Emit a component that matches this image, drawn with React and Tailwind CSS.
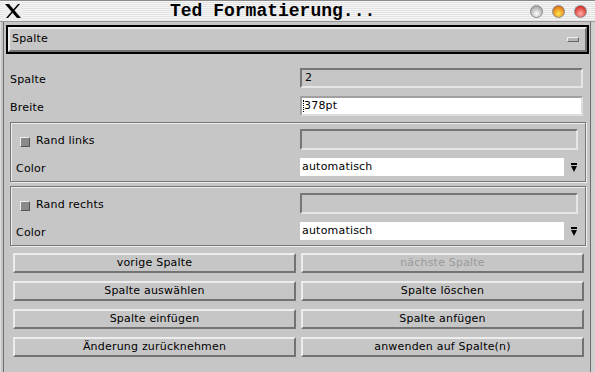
import React from 'react';

const raised = 'border-t-2 border-l-2 border-b-2 border-r-2 border-t-[#ececec] border-l-[#ececec] border-b-[#737373] border-r-[#737373]';
const sunken = 'border-2 border-t-[#767676] border-l-[#767676] border-b-[#e6e6e6] border-r-[#e6e6e6]';

function XLogo() {
    return (
        <svg width="18" height="16" viewBox="0 0 18 16">
            <polygon points="1,1 5,1 17,15 13,15" fill="#000" />
            <polygon points="14,1 16,1 4,15 2,15" fill="#000" />
        </svg>
    );
}

function Dot({ from, to }) {
    return (
        <div
            className="w-[13px] h-[13px] rounded-full border border-[#8a8a8a]"
            style={{ background: `radial-gradient(circle at 50% 70%, ${from} 0%, ${to} 75%)` }}
        />
    );
}

function PinArrow() {
    return (
        <svg width="6" height="9" viewBox="0 0 6 9">
            <rect x="0" y="0" width="6" height="2" fill="#000" />
            <polygon points="0,3 6,3 3,9" fill="#000" />
        </svg>
    );
}

function Button({ children, disabled }) {
    return (
        <div className={`h-[20px] flex items-center justify-center bg-[#c6c6c6] ${raised} ${disabled ? 'text-[#9a9a9a]' : 'text-black'}`}>
            {children}
        </div>
    );
}

function RandFrame({ label }) {
    return (
        <div className="ml-[6px] w-[576px] h-[60px] border border-[#777] shadow-[inset_1px_1px_0_#ececec,1px_1px_0_#ececec] pt-[6px]">
            <div className="flex items-center h-[21px]">
                <div className="w-[289px] flex items-center pl-[9px] pt-[4px]">
                    <div className="w-[10px] h-[10px] bg-[#8a8a8a] border-t border-l border-t-[#eeeeee] border-l-[#eeeeee] border-b border-r border-b-[#555] border-r-[#555]" />
                    <span className="ml-[6px]">{label}</span>
                </div>
                <div className={`w-[278px] h-[21px] ${sunken}`} />
            </div>
            <div className="flex items-center h-[18px] mt-[8px]">
                <div className="w-[289px] pl-[5px] pt-[5px]">Color</div>
                <div className="w-[264px] h-[18px] bg-white flex items-center pl-[2px]">automatisch</div>
                <div className="ml-[7px] flex items-center"><PinArrow /></div>
            </div>
        </div>
    );
}

export default function App() {
    return (
        <div className="w-[595px] h-[372px] bg-[#c6c6c6] overflow-hidden text-[11px] text-black tracking-[0.2px]" style={{ fontFamily: '"DejaVu Sans", sans-serif' }}>
            {/* Title bar */}
            <div className="h-[22px] flex items-center border-t border-[#8a8a8a] border-b border-b-[#9a9a9a] bg-[repeating-linear-gradient(180deg,#f6f6f6_0px,#f6f6f6_1px,#e2e2e2_1px,#e2e2e2_2px)]">
                <div className="ml-[3px] w-[19px] h-[19px] bg-[#eeeeee] flex items-center justify-center">
                    <XLogo />
                </div>
                <div className="ml-[148px] text-[18px] font-bold leading-none tracking-[0px]" style={{ fontFamily: '"Liberation Mono", monospace' }}>
                    Ted Formatierung...
                </div>
                <div className="ml-auto mr-[8px] flex gap-[9px]">
                    <Dot from="#ffffff" to="#a8a8a8" />
                    <Dot from="#ffe84a" to="#e0741a" />
                    <Dot from="#ffb0a8" to="#d8302a" />
                </div>
            </div>

            {/* Body */}
            <div className="h-[350px] flex">
                <div className="w-[4px] h-full border-l border-l-[#dcdcdc] border-r border-r-[#6e6e6e] bg-[#c6c6c6]" />
                <div className="w-[586px] flex flex-col">
                    {/* option menu */}
                    <div className="ml-[2px] mt-[3px] w-[583px] h-[29px] border-2 border-black flex">
                        <div className={`flex-1 flex items-center pl-[2px] ${raised}`}>
                            <span>Spalte</span>
                            <div className="ml-auto mr-[6px] w-[12px] h-[5px] bg-[#b4b4b4] border-t border-l border-[#f0f0f0] border-b border-r border-b-[#666] border-r-[#666]" />
                        </div>
                    </div>

                    {/* Spalte row */}
                    <div className="flex items-center mt-[14px] h-[20px]">
                        <div className="w-[296px] pl-[6px] pt-[5px]">Spalte</div>
                        <div className={`w-[283px] h-[20px] flex items-center pl-[3px] ${sunken}`}>2</div>
                    </div>

                    {/* Breite row */}
                    <div className="flex items-center mt-[8px] h-[20px]">
                        <div className="w-[296px] pl-[6px] pt-[5px]">Breite</div>
                        <div className="w-[283px] h-[20px] bg-white flex items-center border-2 border-t-[#a0a0a0] border-l-[#a0a0a0] border-b-[#dedede] border-r-[#dedede]">
                            <span className="w-[2px] h-[12px] border-l border-dotted border-black ml-[1px]" />
                            <span className="-ml-[1px]">378pt</span>
                        </div>
                    </div>

                    <div className="mt-[6px]">
                        <RandFrame label="Rand links" />
                    </div>
                    <div className="mt-[4px]">
                        <RandFrame label="Rand rechts" />
                    </div>

                    {/* Buttons */}
                    <div className="ml-[9px] mt-[7px] w-[571px] grid grid-cols-2 gap-x-[5px] gap-y-[8px]">
                        <Button>vorige Spalte</Button>
                        <Button disabled>nächste Spalte</Button>
                        <Button>Spalte auswählen</Button>
                        <Button>Spalte löschen</Button>
                        <Button>Spalte einfügen</Button>
                        <Button>Spalte anfügen</Button>
                        <Button>Änderung zurücknehmen</Button>
                        <Button>anwenden auf Spalte(n)</Button>
                    </div>
                </div>
                <div className="w-[5px] h-full border-l border-l-[#6e6e6e] bg-[#cfcfcf]" />
            </div>
        </div>
    );
}
